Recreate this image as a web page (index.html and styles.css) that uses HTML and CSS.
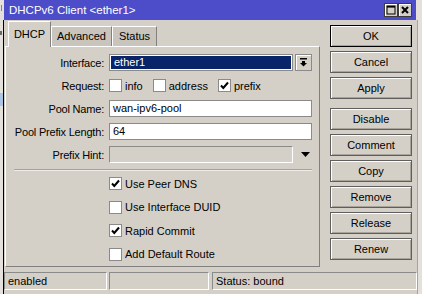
FILE: index.html
```html
<!DOCTYPE html>
<html lang="en">
<head>
    <meta charset="UTF-8">
    <title>DHCPv6 Client &lt;ether1&gt;</title>
    <link rel="stylesheet" href="styles.css">
</head>
<body>
    <div class="screen">
        <div class="backdrop">
            <span class="frag frag-top"></span>
            <span class="frag frag-mid"></span>
            <span class="frag frag-sel"></span>
        </div>

        <div class="window">
            <div class="titlebar">
                <span class="title">DHCPv6 Client &lt;ether1&gt;</span>
                <div class="title-buttons">
                    <span class="tbtn">
                        <svg width="10" height="10" viewBox="0 0 10 10"><rect x="1" y="1" width="8" height="8" fill="none" stroke="#000" stroke-width="1"/><rect x="1" y="1" width="8" height="1.6" fill="#000"/></svg>
                    </span>
                    <span class="tbtn">
                        <svg width="10" height="10" viewBox="0 0 10 10"><path d="M2 2 L8 8 M8 2 L2 8" stroke="#000" stroke-width="2"/></svg>
                    </span>
                </div>
            </div>

            <div class="frame">
                <div class="content">
                    <div class="main">
                        <div class="tabs">
                            <div class="tab active tab-dhcp">DHCP</div>
                            <div class="tab tab-adv">Advanced</div>
                            <div class="tab tab-status">Status</div>
                        </div>

                        <div class="panel">
                            <div class="row">
                                <span class="label">Interface:</span>
                                <span class="field select">ether1</span>
                                <span class="drop-btn">
                                    <svg width="7" height="9" viewBox="0 0 7 9"><rect x="0" y="0" width="7" height="1.5" fill="#000"/><rect x="2" y="3" width="3" height="2" fill="#000"/><path d="M0 5 H7 L3.5 8.5 Z" fill="#000"/></svg>
                                </span>
                            </div>

                            <div class="row">
                                <span class="label">Request:</span>
                                <span class="opt"><span class="check"></span>info</span>
                                <span class="opt"><span class="check"></span>address</span>
                                <span class="opt"><span class="check"><svg width="11" height="11" viewBox="0 0 11 11"><path d="M2 5.5 L4.3 8 L9 2.5" fill="none" stroke="#000" stroke-width="2"/></svg></span>prefix</span>
                            </div>

                            <div class="row">
                                <span class="label">Pool Name:</span>
                                <span class="field">wan-ipv6-pool</span>
                            </div>

                            <div class="row">
                                <span class="label">Pool Prefix Length:</span>
                                <span class="field">64</span>
                            </div>

                            <div class="row">
                                <span class="label">Prefix Hint:</span>
                                <span class="field select disabled"></span>
                                <span class="drop-arrow">
                                    <svg width="9" height="5" viewBox="0 0 9 5"><path d="M0 0 H9 L4.5 5 Z" fill="#000"/></svg>
                                </span>
                            </div>

                            <div class="separator"></div>

                            <div class="checks">
                                <div class="check-row"><span class="check"><svg width="11" height="11" viewBox="0 0 11 11"><path d="M2 5.5 L4.3 8 L9 2.5" fill="none" stroke="#000" stroke-width="2"/></svg></span>Use Peer DNS</div>
                                <div class="check-row"><span class="check"></span>Use Interface DUID</div>
                                <div class="check-row"><span class="check"><svg width="11" height="11" viewBox="0 0 11 11"><path d="M2 5.5 L4.3 8 L9 2.5" fill="none" stroke="#000" stroke-width="2"/></svg></span>Rapid Commit</div>
                                <div class="check-row"><span class="check"></span>Add Default Route</div>
                            </div>
                        </div>
                    </div>

                    <div class="actions">
                        <div class="btn default">OK</div>
                        <div class="btn">Cancel</div>
                        <div class="btn">Apply</div>
                        <div class="btn spaced">Disable</div>
                        <div class="btn">Comment</div>
                        <div class="btn">Copy</div>
                        <div class="btn">Remove</div>
                        <div class="btn">Release</div>
                        <div class="btn">Renew</div>
                    </div>
                </div>

                <div class="statusbar">
                    <div class="cell cell-state">enabled</div>
                    <div class="cell cell-empty"></div>
                    <div class="cell cell-status">Status: bound</div>
                </div>
            </div>
        </div>
    </div>
</body>
</html>
```

FILE: styles.css
```css
body {
    margin: 0;
    width: 422px;
    height: 294px;
    overflow: hidden;
    background: #e4e1dc;
    font-family: "Liberation Sans", Arial, sans-serif;
    font-size: 11px;
    color: #000;
}

.screen {
    display: flex;
    height: 294px;
}

/* bits of the window behind */
.backdrop {
    width: 3px;
    flex: none;
    display: flex;
    flex-direction: column;
}

.frag {
    display: block;
}

.frag-top {
    width: 1px;
    height: 6px;
    margin: 5px 0 0 1px;
    background: #b87848;
}

.frag-mid {
    width: 2px;
    height: 4px;
    margin-top: 20px;
    background: #6a6a6a;
}

.frag-sel {
    width: 3px;
    height: 13px;
    margin-top: 58px;
    background: #a9c6e6;
}

.window {
    width: 415px;
    flex: none;
    display: flex;
    flex-direction: column;
}

.titlebar {
    height: 20px;
    margin-right: 2px;
    border-left: 1px solid #e4e1dc;
    background: #4d4dc9;
    display: flex;
    align-items: center;
    justify-content: space-between;
    padding: 0 4px 0 5px;
}

.title {
    color: #fff;
    font-size: 11.5px;
}

.title-buttons {
    display: flex;
}

.tbtn {
    width: 14px;
    height: 14px;
    box-sizing: border-box;
    border: 1px solid #3c3c3c;
    background: #d4d0c8;
    box-shadow: inset 1px 1px #fff;
    display: flex;
    align-items: center;
    justify-content: center;
}

.frame {
    flex: 1;
    background: #d4d0c8;
    border-left: 1px solid #000;
    border-right: 1px solid #a8a49c;
    display: flex;
    flex-direction: column;
}

.content {
    display: flex;
    height: 252px;
}

.main {
    margin-left: 1px;
    width: 315px;
    padding-top: 1px;
}

.tabs {
    display: flex;
    align-items: flex-end;
    height: 25px;
    padding-left: 3px;
}

.tab {
    height: 20px;
    box-sizing: border-box;
    border-left: 1px solid #fff;
    border-top: 1px solid #fff;
    border-right: 1px solid #808080;
    background: #c9c5bd;
    text-align: center;
    line-height: 19px;
}

.tab.active {
    height: 26px;
    margin-bottom: -1px;
    background: #d4d0c8;
    line-height: 24px;
    position: relative;
    z-index: 1;
}

.tab-dhcp {
    width: 43px;
}

.tab-adv {
    width: 61px;
}

.tab-status {
    width: 45px;
}

.panel {
    height: 221px;
    box-sizing: border-box;
    border: 1px solid;
    border-color: #fff #808080 #808080 #fff;
    padding-top: 7px;
}

.row {
    display: flex;
    align-items: center;
    height: 17px;
    margin-bottom: 6px;
}

.label {
    width: 98px;
    flex: none;
    margin-right: 5px;
    text-align: right;
    letter-spacing: -0.2px;
}

.field {
    width: 203px;
    height: 17px;
    box-sizing: border-box;
    border: 1px solid #8a8a8a;
    background: #fff;
    padding-left: 3px;
    line-height: 15px;
}

.field.select {
    width: 184px;
    background: #0a246a;
    color: #fff;
    box-shadow: inset 0 0 0 1px #fff;
    padding-left: 4px;
}

.field.disabled {
    background: #d4d0c8;
    box-shadow: none;
    border-color: #8a8a8a #fff #fff #8a8a8a;
}

.drop-btn {
    width: 17px;
    height: 17px;
    margin-left: 2px;
    box-sizing: border-box;
    border: 1px solid #8a8a8a;
    box-shadow: inset 1px 1px #fff;
    display: flex;
    align-items: center;
    justify-content: center;
}

.drop-arrow {
    width: 17px;
    margin-left: 4px;
    display: flex;
    justify-content: center;
}

.opt {
    display: flex;
    align-items: center;
    margin-right: 10px;
}

.check {
    width: 13px;
    height: 13px;
    box-sizing: border-box;
    border: 1px solid #8a8a8a;
    background: #fff;
    margin-right: 3px;
    display: flex;
    align-items: center;
    justify-content: center;
    flex: none;
}

.separator {
    width: 298px;
    margin: 1px 0 0 8px;
    border-top: 1px solid #a6a29a;
    border-bottom: 1px solid #eeece8;
}

.checks {
    margin-top: 6px;
    padding-left: 103px;
    display: flex;
    flex-direction: column;
    gap: 10.5px;
}

.check-row {
    display: flex;
    align-items: center;
    height: 13px;
}

.actions {
    width: 82px;
    margin-left: 10px;
    padding-top: 5px;
    display: flex;
    flex-direction: column;
    gap: 4px;
}

.btn {
    height: 22px;
    box-sizing: border-box;
    border: 1px solid #5e5e5e;
    box-shadow: inset 1px 1px #fff, inset -1px -1px #a8a49c;
    text-align: center;
    line-height: 20px;
}

.btn.default {
    border-color: #000;
}

.btn.spaced {
    margin-top: 5px;
}

.statusbar {
    display: flex;
    height: 18px;
}

.cell {
    box-sizing: border-box;
    border: 1px solid;
    border-color: #8a8a8a #fff #fff #8a8a8a;
    padding-left: 3px;
    line-height: 16px;
}

.cell-state {
    width: 103px;
}

.cell-empty {
    width: 100px;
    margin-left: 2px;
}

.cell-status {
    flex: 1;
    margin-left: 3px;
}
```
